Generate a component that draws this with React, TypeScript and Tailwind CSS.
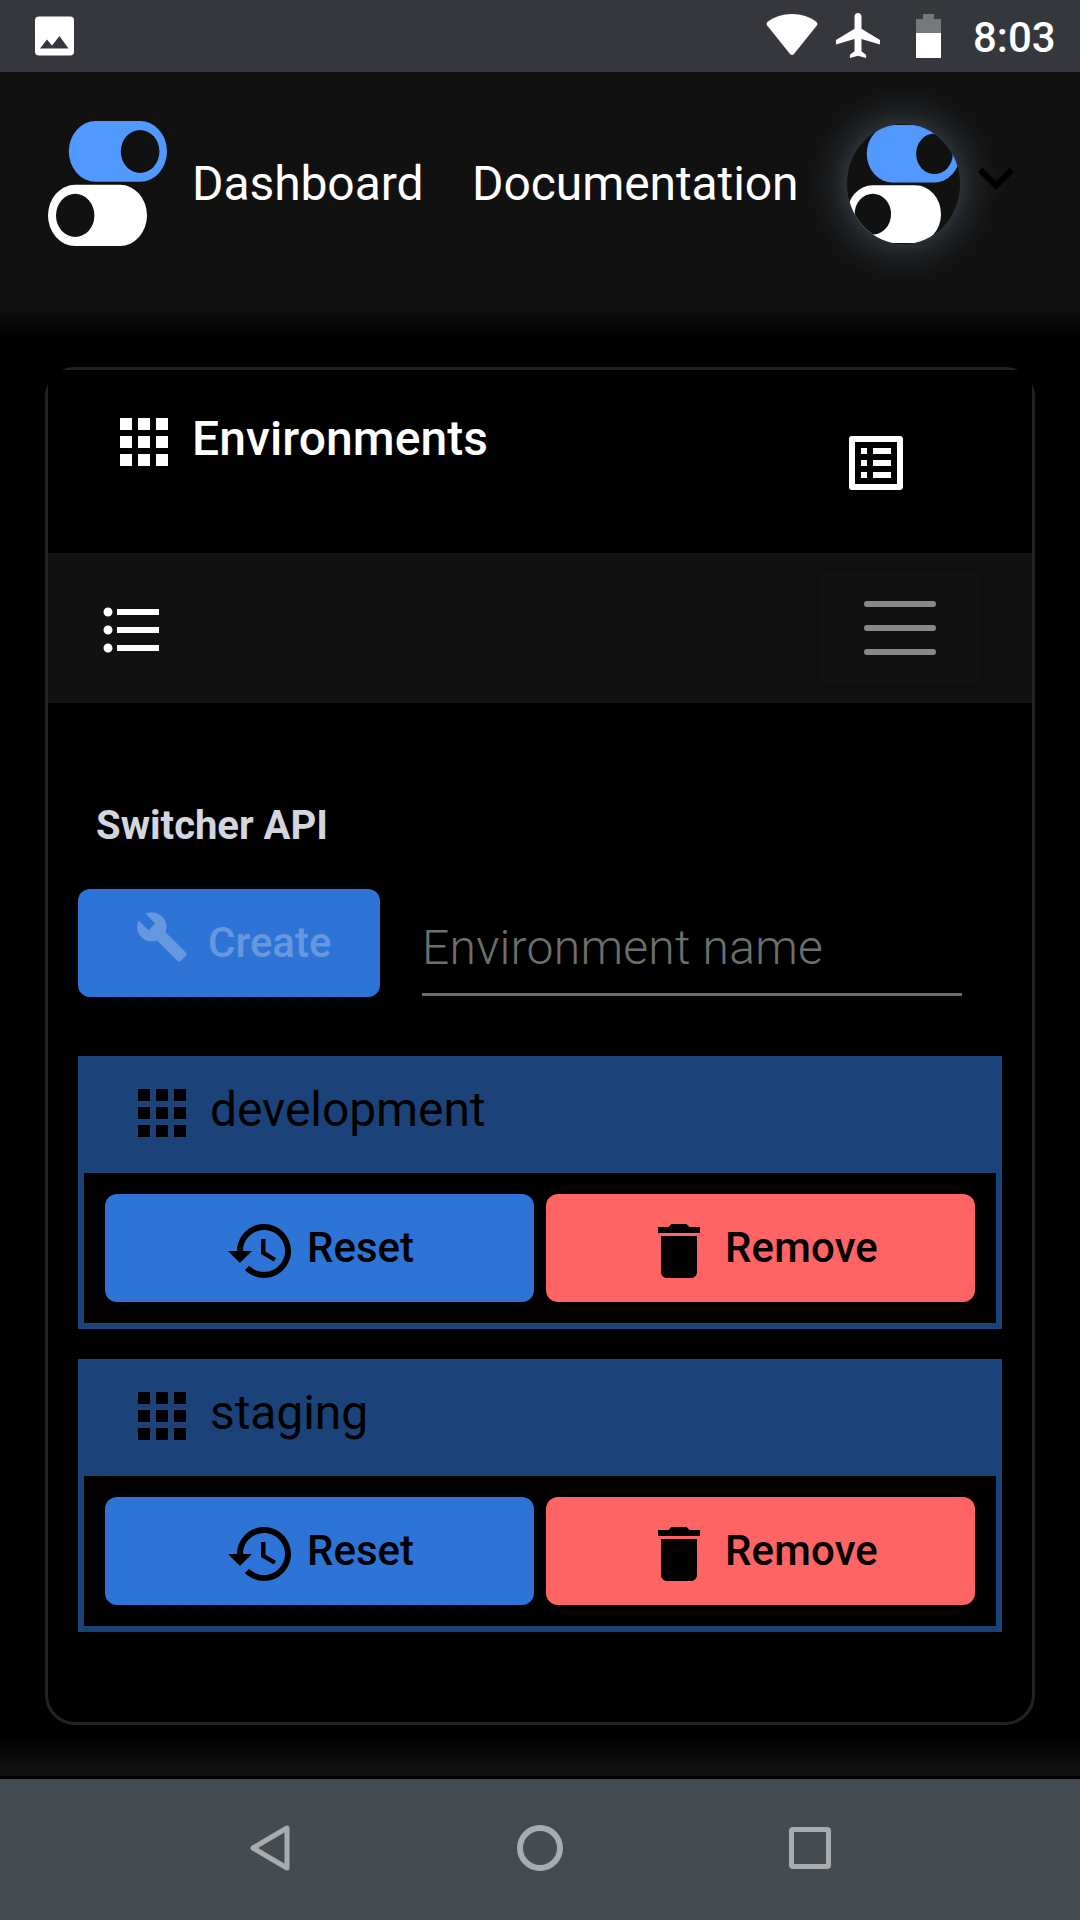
import React from "react";

type IconProps = { d: string; className?: string };

function Icon({ d, className = "" }: IconProps) {
  return (
    <svg viewBox="0 0 24 24" fill="currentColor" className={`shrink-0 ${className}`}>
      <path d={d} />
    </svg>
  );
}

const APPS =
  "M4 8h4V4H4v4zm6 12h4v-4h-4v4zm-6 0h4v-4H4v4zm0-6h4v-4H4v4zm6 0h4v-4h-4v4zm6-10v4h4V4h-4zm-6 4h4V4h-4v4zm6 6h4v-4h-4v4zm0 6h4v-4h-4v4z";
const LIST_ALT =
  "M19 5v14H5V5h14m1.1-2H3.9c-.5 0-.9.4-.9.9v16.2c0 .4.4.9.9.9h16.2c.4 0 .9-.5.9-.9V3.9c0-.5-.5-.9-.9-.9zM11 7h6v2h-6V7zm0 4h6v2h-6v-2zm0 4h6v2h-6v-2zM7 7h2v2H7V7zm0 4h2v2H7v-2zm0 4h2v2H7v-2z";
const BULLETS =
  "M4 10.5c-.83 0-1.5.67-1.5 1.5s.67 1.5 1.5 1.5 1.5-.67 1.5-1.5-.67-1.5-1.5-1.5zm0-6c-.83 0-1.5.67-1.5 1.5S3.17 7.5 4 7.5 5.5 6.83 5.5 6 4.83 4.5 4 4.5zm0 12c-.83 0-1.5.68-1.5 1.5s.68 1.5 1.5 1.5 1.5-.68 1.5-1.5-.67-1.5-1.5-1.5zM7 19h14v-2H7v2zm0-6h14v-2H7v2zm0-8v2h14V5H7z";
const BUILD =
  "M22.7 19l-9.1-9.1c.9-2.3.4-5-1.5-6.9-2-2-5-2.4-7.4-1.3L9 6 6 9 1.6 4.7C.4 7.1.9 10.1 2.9 12.1c1.9 1.9 4.6 2.4 6.9 1.5l9.1 9.1c.4.4 1 .4 1.4 0l2.3-2.3c.5-.4.5-1.1.1-1.4z";
const HISTORY =
  "M13 3c-4.97 0-9 4.03-9 9H1l3.89 3.89.07.14L9 12H6c0-3.87 3.13-7 7-7s7 3.13 7 7-3.13 7-7 7c-1.93 0-3.68-.79-4.94-2.06l-1.42 1.42C8.27 19.99 10.51 21 13 21c4.97 0 9-4.03 9-9s-4.03-9-9-9zm-1 5v5l4.28 2.54.72-1.21-3.5-2.08V8H12z";
const DELETE = "M6 19c0 1.1.9 2 2 2h8c1.1 0 2-.9 2-2V7H6v12zM19 4h-3.5l-1-1h-5l-1 1H5v2h14V4z";
const EXPAND = "M16.59 8.59L12 13.17 7.41 8.59 6 10l6 6 6-6z";
const FLIGHT =
  "M21 16v-2l-8-5V3.5c0-.83-.67-1.5-1.5-1.5S10 2.67 10 3.5V9l-8 5v2l8-2.5V19l-2 1.5V22l3.5-1 3.5 1v-1.5L13 19v-5.5l8 2.5z";

function Logo({ className = "" }: { className?: string }) {
  return (
    <svg viewBox="0 0 119 125" preserveAspectRatio="none" className={`shrink-0 ${className}`}>
      <rect x="20.8" y="0" width="98.2" height="60.8" rx="27" ry="30.4" fill="#5299ff" />
      <ellipse cx="92.1" cy="30.5" rx="19.3" ry="21.5" fill="#111111" />
      <rect x="0" y="63.8" width="99" height="61.2" rx="27" ry="30.6" fill="#ffffff" />
      <ellipse cx="27.2" cy="94.4" rx="19.2" ry="21.6" fill="#111111" />
    </svg>
  );
}

function StatusBar() {
  return (
    <div className="flex h-[72px] items-start bg-[#36373c] text-white">
      <svg viewBox="0 0 39 40" className="ml-[35px] mt-4 h-10 w-[39px]">
        <rect x="0" y="0.5" width="39" height="39" rx="4" fill="#fff" />
        <path d="M5 32.5 L12 23.5 L17 29.5 L24.5 20 L33.5 32.5 Z" fill="#36373c" />
      </svg>
      <svg viewBox="0 0 52 42" className="ml-[692px] mt-[14px] h-[42px] w-[52px]">
        <path
          d="M1.2 8.2 C15 -2.6 37 -2.6 50.8 8.2 Q52 9.6 51 11.2 L28.2 39.8 Q26 42.2 23.8 39.8 L1 11.2 Q0 9.6 1.2 8.2 Z"
          fill="#fff"
        />
      </svg>
      <svg viewBox="2 2 19 20" preserveAspectRatio="none" className="ml-[18px] mt-[13px] h-[45px] w-[44px]">
        <path d={FLIGHT} fill="#fff" />
      </svg>
      <svg viewBox="0 0 25 44" className="ml-9 mt-[14px] h-11 w-[25px]">
        <path d="M7 0h11v5h7v14H0V5h7z" fill="#77787b" />
        <rect x="0" y="19" width="25" height="25" fill="#fff" />
      </svg>
      <span className="ml-8 mt-4 text-[42px] font-medium leading-[44px]">8:03</span>
    </div>
  );
}

function Header() {
  return (
    <header className="flex h-[295px] items-start bg-[linear-gradient(to_bottom,#111_0,#111_226px,#0f0f0f_238px,#0a0a0a_248px,#040404_259px,#010101_268px,#000_278px)] pl-12 text-white">
      <Logo className="mt-[49px] h-[125px] w-[119px]" />
      <nav className="ml-[25px] mt-[88px] flex text-[48px] leading-[48px] tracking-[-0.08px]">
        <a className="w-[280px]">Dashboard</a>
        <a className="w-[375px]">Documentation</a>
      </nav>
      <div className="mt-[52px] h-[120px] w-[113px] overflow-hidden rounded-[50%] bg-[#111] shadow-[0_0_45px_#4c5966]">
        <Logo className="mt-px h-[118px] w-[113px]" />
      </div>
      <Icon d={EXPAND} className="mt-[70px] size-[72px] text-black" />
    </header>
  );
}

function Environment({ name }: { name: string }) {
  return (
    <section className="h-[273px] border-[6px] border-t-0 border-[#1b437a] bg-black text-black">
      <div className="flex h-[117px] items-start bg-[#1b437a] pl-[42px]">
        <Icon d={APPS} className="mt-[21px] size-[72px]" />
        <span className="ml-3 mt-[30px] text-[48px] leading-[48px] tracking-[-0.08px]">{name}</span>
      </div>
      <div className="grid grid-cols-2 gap-3 px-[21px] pt-[21px] text-[42px] font-medium leading-[42px]">
        <button className="flex h-[108px] items-start rounded-xl bg-[#2d74d6] pl-[120px]">
          <Icon d={HISTORY} className="mt-[21px] size-[72px]" />
          <span className="ml-[10px] mt-[33px]">Reset</span>
        </button>
        <button className="flex h-[108px] items-start rounded-xl bg-[#ff6464] pl-[97px]">
          <Icon d={DELETE} className="mt-[21px] size-[72px]" />
          <span className="ml-[10px] mt-[33px] tracking-[0.15px]">Remove</span>
        </button>
      </div>
    </section>
  );
}

function Card() {
  return (
    <main className="mx-[45px] h-[1358px] rounded-[30px] border-[3px] border-[#222] bg-black">
      <div className="flex h-[183px] items-start bg-black pl-[60px] text-white">
        <Icon d={APPS} className="mt-9 size-[72px]" />
        <h1 className="ml-3 mt-[45px] w-[648px] text-[48px] font-medium leading-[48px] tracking-[0.08px]">
          Environments
        </h1>
        <Icon d={LIST_ALT} className="mt-[57px] size-[72px]" />
      </div>
      <div className="flex h-[150px] items-center justify-between bg-[#111] pl-12 pr-12 text-white">
        <Icon d={BULLETS} className="mt-1 size-[72px]" />
        <button className="flex h-[120px] w-[168px] items-center justify-center rounded-xl border-[3px] border-[#0f0f0f]">
          <svg viewBox="0 0 30 30" className="size-[90px]">
            <path
              d="M4 7h22M4 15h22M4 23h22"
              stroke="#888888"
              strokeWidth="2"
              strokeLinecap="round"
              strokeMiterlimit="10"
            />
          </svg>
        </button>
      </div>
      <div className="px-[30px] pt-[101px]">
        <h2 className="ml-[18px] pt-px text-[40px] font-bold leading-[41px] text-[#d3d6de]">Switcher API</h2>
        <div className="mt-[43px] flex items-start">
          <button className="flex h-[108px] w-[302px] items-start rounded-xl bg-[#2d74d6] pl-[57px] text-[42px] font-medium leading-[42px] text-[#6598de]">
            <Icon d={BUILD} className="mt-[21px] size-[54px]" />
            <span className="ml-[19px] mt-[33px]">Create</span>
          </button>
          <div className="ml-[42px] h-[107px] w-[540px] border-b-[3px] border-[#6b706e] pt-[35px]">
            <span className="text-[48px] font-light leading-[48px] tracking-[0.26px] text-[#6b706e]">
              Environment name
            </span>
          </div>
        </div>
        <div className="mt-[59px] flex flex-col gap-[30px]">
          <Environment name="development" />
          <Environment name="staging" />
        </div>
      </div>
    </main>
  );
}

function NavBar() {
  return (
    <div className="flex h-[141px] items-start bg-[#454c51] pt-[46px]">
      <svg viewBox="0 0 40 46" className="ml-[250px] h-[46px] w-10">
        <path d="M37 3 L37 43 L3 23 Z" fill="none" stroke="#a9acaf" strokeWidth="5" strokeLinejoin="round" />
      </svg>
      <div className="ml-[227px] size-[46px] rounded-full border-[6px] border-[#a9acaf]" />
      <div className="ml-[226px] mt-0.5 size-[42px] rounded border-[5px] border-[#a9acaf]" />
    </div>
  );
}

export default function App() {
  return (
    <div className="h-[1920px] w-[1080px] overflow-hidden bg-black font-['Roboto',sans-serif]">
      <StatusBar />
      <Header />
      <Card />
      <div className="h-[51px] bg-[linear-gradient(to_bottom,#000_0,#020202_14px,#0c0c0c_34px,#111_51px)]" />
      <div className="h-[3px] bg-black" />
      <NavBar />
    </div>
  );
}
